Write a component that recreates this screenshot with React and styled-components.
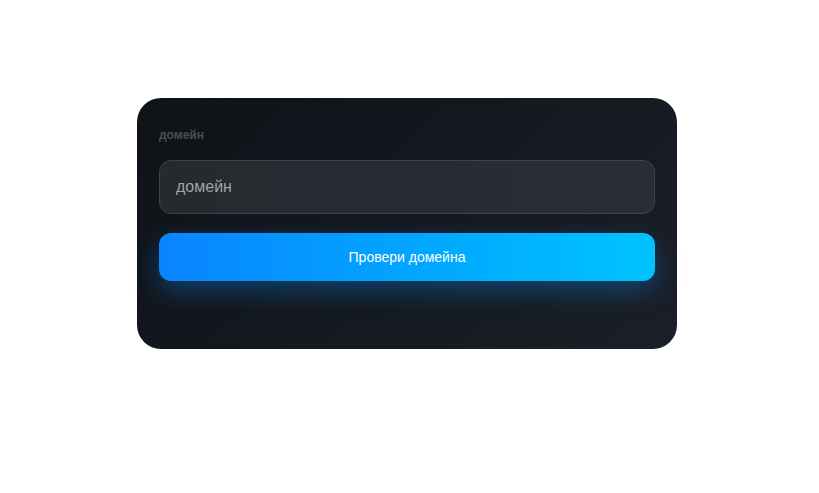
import styled, { createGlobalStyle } from "styled-components";

const GlobalStyle = createGlobalStyle`
  body {
    margin: 0;
    background: #ffffff;
    font-family: "Liberation Sans", Arial, sans-serif;
  }
`;

const Page = styled.div`
  padding: 98px 0 0 137px;
`;

const Card = styled.div`
  width: 540px;
  height: 251px;
  box-sizing: border-box;
  padding: 29px 22px 0 22px;
  border-radius: 24px;
  background: linear-gradient(135deg, #0f1217 0%, #151920 55%, #1b1f27 100%);
  display: flex;
  flex-direction: column;
`;

const Label = styled.label`
  font-size: 12px;
  font-weight: 700;
  line-height: 16px;
  color: #4a4e55;
  margin-bottom: 17px;
`;

const Input = styled.input`
  height: 54px;
  box-sizing: border-box;
  padding: 0 16px;
  border-radius: 12px;
  border: 1px solid #3e4148;
  background: linear-gradient(90deg, #26292e 0%, #2a2d35 100%);
  font-family: inherit;
  font-size: 16px;
  color: #e5e7eb;
  outline: none;

  &::placeholder {
    color: #a0a3a8;
  }
`;

const Button = styled.button`
  margin-top: 19px;
  height: 48px;
  border: none;
  border-radius: 12px;
  background: linear-gradient(90deg, #0a84ff 0%, #00a8ff 55%, #00c3ff 100%);
  box-shadow: 0 10px 26px rgba(0, 140, 255, 0.35);
  color: #ffffff;
  font-family: inherit;
  font-size: 14px;
  cursor: pointer;
`;

export default function App() {
  return (
    <>
      <GlobalStyle />
      <Page>
        <Card>
          <Label>домейн</Label>
          <Input placeholder="домейн" />
          <Button>Провери домейна</Button>
        </Card>
      </Page>
    </>
  );
}
